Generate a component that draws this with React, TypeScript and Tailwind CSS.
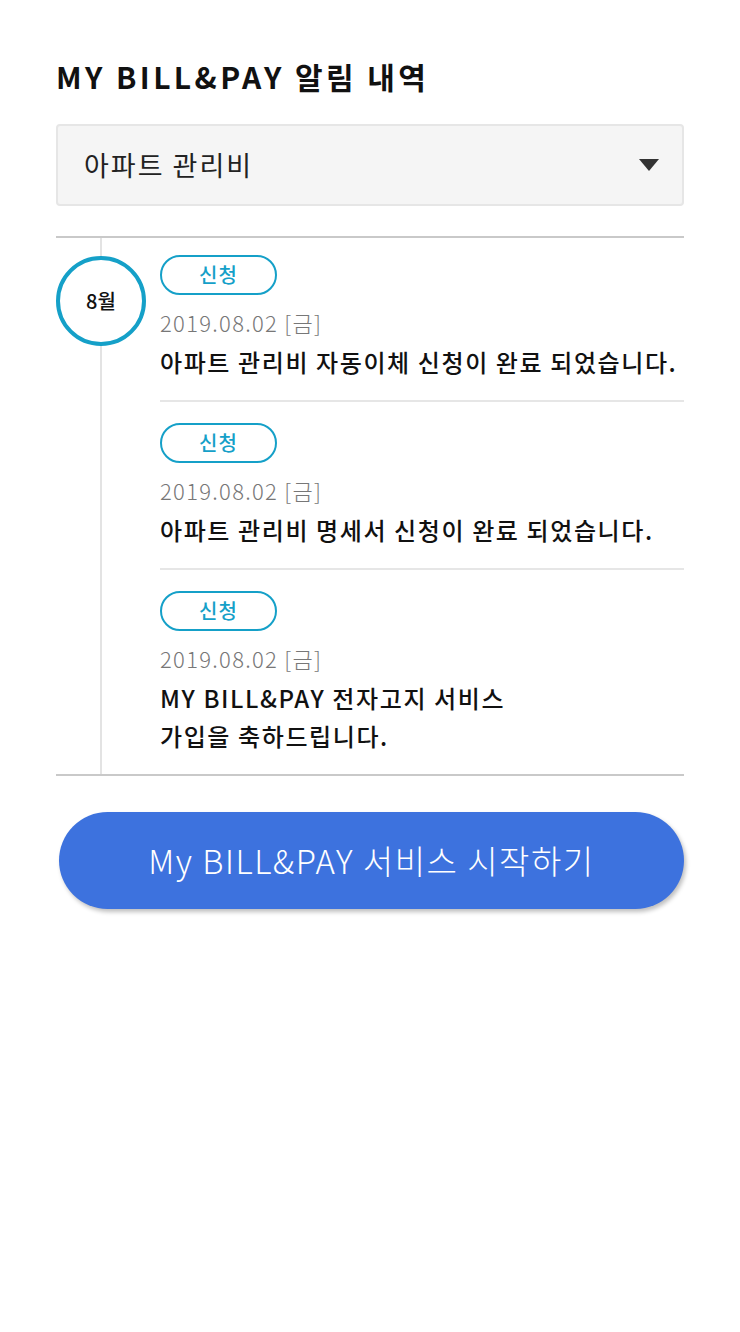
const notices = [
  {
    tag: '신청',
    date: '2019.08.02 [금]',
    message: ['아파트 관리비 자동이체 신청이 완료 되었습니다.'],
  },
  {
    tag: '신청',
    date: '2019.08.02 [금]',
    message: ['아파트 관리비 명세서 신청이 완료 되었습니다.'],
  },
  {
    tag: '신청',
    date: '2019.08.02 [금]',
    message: ['MY BILL&PAY 전자고지 서비스', '가입을 축하드립니다.'],
  },
];

export default function App() {
  return (
    <div
      className="min-h-[1332px] bg-white px-14 pt-[52px]"
      style={{ fontFamily: '"Noto Sans CJK KR", "Noto Sans", sans-serif' }}
    >
      {/* Title */}
      <h1 className="text-[30px] font-bold leading-[48px] tracking-[3.4px] text-[#111]">
        MY BILL&amp;PAY 알림 내역
      </h1>

      {/* Select */}
      <div className="mt-6 flex h-[82px] items-center justify-between rounded-[4px] border-2 border-[#e6e6e6] bg-[#f5f5f5] pl-[26px] pr-5">
        <span className="text-[27px] tracking-[2px] text-[#222]">아파트 관리비</span>
        <svg width="22" height="14" viewBox="0 0 22 14" className="mr-[2px]">
          <path d="M1 1h20L11 13z" fill="#333" />
        </svg>
      </div>

      {/* Timeline */}
      <div className="relative mt-[30px] border-y-2 border-[#c9c9c9]">
        <div className="absolute bottom-0 left-[44px] top-0 w-[2px] bg-[#e3e3e3]" />
        <div className="absolute left-0 top-[18px] flex h-[90px] w-[90px] items-center justify-center rounded-full border-4 border-[#15a0c8] bg-white">
          <span className="text-[20px] font-medium text-[#111]">8월</span>
        </div>

        <div className="ml-[104px]">
          {notices.map((n, i) => (
            <div
              key={i}
              className={`pb-[19px] ${i === 0 ? 'pt-[17px]' : 'pt-[21px]'} ${
                i < notices.length - 1 ? 'border-b-2 border-[#e6e6e6]' : ''
              }`}
            >
              <div className="flex h-10 w-[117px] items-center justify-center rounded-full border-2 border-[#15a0c8] text-[20px] font-medium tracking-[1px] text-[#15a0c8]">
                {n.tag}
              </div>
              <div className="mt-3 text-[22px] font-light leading-[30px] tracking-[1.3px] text-[#777]">
                {n.date}
              </div>
              <div className="mt-[6px] whitespace-nowrap text-[24px] font-medium leading-[38px] tracking-[1.6px] text-[#111]">
                {n.message.map((line, j) => (
                  <div key={j}>{line}</div>
                ))}
              </div>
            </div>
          ))}
        </div>
      </div>

      {/* Button */}
      <button className="mt-[36px] ml-[3px] flex h-[97px] w-[625px] items-center justify-center rounded-full bg-[#3d72de] text-[33px] font-light tracking-[1.5px] text-white shadow-[2px_3px_4px_rgba(0,0,0,0.25)]">
        My BILL&amp;PAY 서비스 시작하기
      </button>
    </div>
  );
}
